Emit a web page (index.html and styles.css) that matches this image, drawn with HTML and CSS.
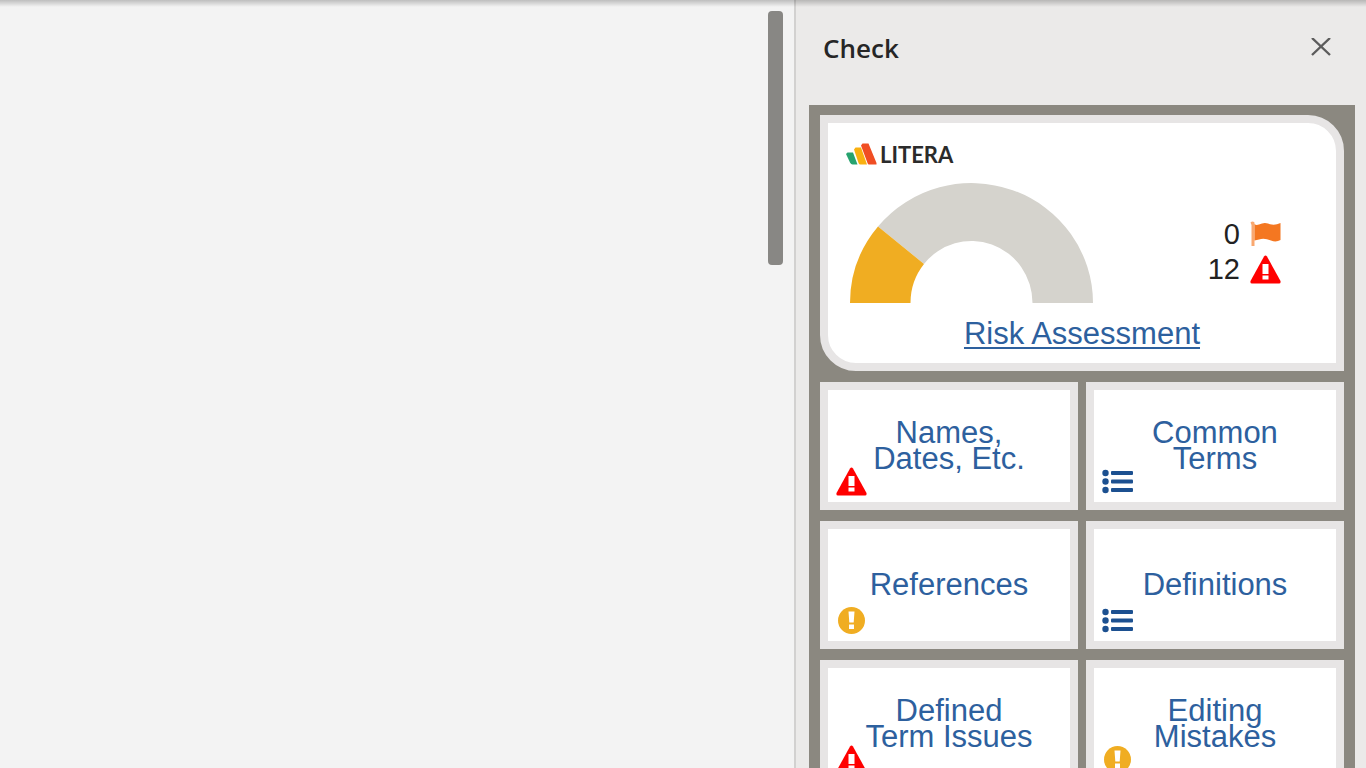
FILE: index.html
```html
<!DOCTYPE html>
<html lang="en">
<head>
    <meta charset="UTF-8">
    <meta name="viewport" content="width=device-width, initial-scale=1.0">
    <title>Check</title>

    <link rel="stylesheet" href="styles.css">
</head>
<body>
    <!-- Shared icons -->
    <svg class="icon-defs" aria-hidden="true">
        <symbol id="icon-warning" viewBox="0 0 31 29">
            <path fill="#ff0000" d="M14 1.5Q15.500 -.5 17 1.500L30.500 26Q31 28.500 29 28.500H2Q0 28.500 .5 26Z"/>
            <path fill="#fff" d="M12.500 9h6v10h-6zM12.500 20.500h6v4h-6z"/>
        </symbol>
        <symbol id="icon-caution" viewBox="0 0 31 29">
            <circle cx="15.500" cy="14.500" r="13.500" fill="#f0ad22"/>
            <path fill="#fff" d="M12.500 5.500h6l-.8 11h-4.400zM13 18.500h5v4.500h-5z"/>
        </symbol>
        <symbol id="icon-list" viewBox="0 0 31 29">
            <g fill="#1c5090">
                <circle cx="3.500" cy="6" r="3.200"/>
                <circle cx="3.500" cy="14.500" r="3.200"/>
                <circle cx="3.500" cy="23" r="3.200"/>
                <rect x="9" y="4" width="22" height="4" rx="1"/>
                <rect x="9" y="12.500" width="22" height="4" rx="1"/>
                <rect x="9" y="21" width="22" height="4" rx="1"/>
            </g>
        </symbol>
        <symbol id="icon-flag" viewBox="0 0 31 29">
            <path fill="#f9a870" d="M.5 2.500Q2.500 .5 4.500 2.500V26H1.500V5Z"/>
            <path fill="#f47721" d="M4.500 4Q6 5.500 9 4.500Q14 2 18 3.500Q24 6 30.500 3V20Q26 22.500 21 20.500Q14 17.500 9 19.500L4.500 20.500Z"/>
        </symbol>
    </svg>

    <div class="app">
        <main class="document">
            <div class="scroll-thumb"></div>
        </main>

        <aside class="panel">
            <header class="panel-header">
                <h1>Check</h1>
                <button class="close" type="button" aria-label="Close">
                    <svg width="20" height="20" viewBox="0 0 20 20">
                        <path d="M1 0l18 17M19 0L1 17" fill="none" stroke="#5c5c5c" stroke-width="2.4"/>
                    </svg>
                </button>
            </header>

            <div class="board">
                <section class="card">
                    <div class="logo">
                        <svg width="31" height="22" viewBox="0 0 31 22">
                            <path fill="#27a36f" d="M0 11l1.500-1.500H7l4.500 12H6.500Q5 21.500 4 19.500z"/>
                            <path fill="#f9b010" d="M8 6.500L9.500 4.500H15l6 17h-6.500Q13 21.500 12.500 20z"/>
                            <path fill="#f04e23" d="M15 2.500L16.500 .5H22.500L30.500 20v1.500H23Q22 21.500 21.500 20z"/>
                        </svg>
                        <span>LITERA</span>
                    </div>

                    <div class="summary">
                        <svg class="gauge" width="243" height="120" viewBox="0 0 243 120" role="img" aria-label="Risk level">
                            <path fill="#d5d3cd" d="M28 43.400A121.500 120 0 0 1 243 120H182.500A61 62 0 0 0 74 81Z"/>
                            <path fill="#f0ad22" d="M0 120A121.500 120 0 0 1 28 43.400L74 81A61 62 0 0 0 60.500 120Z"/>
                        </svg>
                        <ul class="counts">
                            <li>0 <svg class="icon"><use href="#icon-flag"/></svg></li>
                            <li>12 <svg class="icon"><use href="#icon-warning"/></svg></li>
                        </ul>
                    </div>

                    <a class="risk-link" href="#">Risk Assessment</a>
                </section>

                <nav class="tiles">
                    <a class="tile" href="#">
                        <span>Names,<br>Dates, Etc.</span>
                        <svg class="icon"><use href="#icon-warning"/></svg>
                    </a>
                    <a class="tile" href="#">
                        <span>Common<br>Terms</span>
                        <svg class="icon"><use href="#icon-list"/></svg>
                    </a>
                    <a class="tile" href="#">
                        <span>References</span>
                        <svg class="icon"><use href="#icon-caution"/></svg>
                    </a>
                    <a class="tile" href="#">
                        <span>Definitions</span>
                        <svg class="icon"><use href="#icon-list"/></svg>
                    </a>
                    <a class="tile" href="#">
                        <span>Defined<br>Term Issues</span>
                        <svg class="icon"><use href="#icon-warning"/></svg>
                    </a>
                    <a class="tile" href="#">
                        <span>Editing<br>Mistakes</span>
                        <svg class="icon"><use href="#icon-caution"/></svg>
                    </a>
                </nav>
            </div>
        </aside>
    </div>
</body>
</html>
```
FILE: styles.css
```css
* {
    box-sizing: border-box;
}

body {
    margin: 0;
    font-family: Arial, "Liberation Sans", sans-serif;
    background: #f3f3f3;
    overflow: hidden;
}

.icon-defs {
    position: absolute;
    width: 0;
    height: 0;
}

.app {
    display: flex;
    height: 100vh;
    overflow: hidden;
}

/* Shadow cast by the ribbon above */
.app::before {
    content: "";
    position: absolute;
    top: 0;
    left: 0;
    right: 0;
    height: 7px;
    background: linear-gradient(to bottom, rgba(0,0,0,0.22), rgba(0,0,0,0));
}

/* Document area */
.document {
    flex: 1;
    display: flex;
    justify-content: flex-end;
    padding: 11px 11px 0 0;
}

.scroll-thumb {
    width: 15px;
    height: 254px;
    background: #888784;
    border-radius: 4px;
}

/* Side panel */
.panel {
    width: 572px;
    padding: 0 11px 0 13px;
    background: #ebeae9;
    border-left: 2px solid #d2d1d0;
}

.panel-header {
    display: flex;
    align-items: center;
    justify-content: space-between;
    height: 105px;
    padding: 0 20px 10px 14px;
}

.panel-header h1 {
    margin: 0;
    font-family: "Segoe UI", "Open Sans", sans-serif;
    font-size: 26px;
    font-weight: 600;
    line-height: 36px;
    color: #262626;
}

.close {
    display: flex;
    padding: 4px;
    background: none;
    border: none;
    cursor: pointer;
}

.board {
    padding: 10px 11px;
    background: #8b8880;
}

/* Risk summary */
.card {
    display: flex;
    flex-direction: column;
    height: 256px;
    margin-bottom: 11px;
    padding: 18px;
    background: #fff;
    border: 8px solid #e7e5e5;
    border-radius: 0 36px 0 36px;
}

.logo {
    display: flex;
    align-items: center;
    gap: 3px;
    height: 26px;
    font-family: Lato, sans-serif;
    font-size: 22px;
    font-weight: 700;
    color: #2b2b2b;
}

.summary {
    display: flex;
    align-items: center;
    justify-content: space-between;
    padding: 16px 37px 0 4px;
}

.counts {
    margin: 0;
    padding: 18px 0 0;
    list-style: none;
    font-size: 29px;
    line-height: 35px;
    color: #222;
}

.counts li {
    display: flex;
    align-items: center;
    justify-content: flex-end;
    gap: 10px;
}

.icon {
    width: 31px;
    height: 29px;
}

.risk-link {
    align-self: center;
    margin-top: 13px;
    font-size: 31px;
    line-height: 36px;
    text-decoration-thickness: 2px;
    text-underline-offset: 3px;
    color: #2d609e;
}

/* Check tiles */
.tiles {
    display: grid;
    grid-template-columns: 1fr 1fr;
    gap: 11px 8px;
}

.tile {
    position: relative;
    display: flex;
    align-items: center;
    justify-content: center;
    height: 128px;
    background: #fff;
    border: 8px solid #e7e5e5;
    font-size: 31px;
    line-height: 26px;
    text-align: center;
    text-decoration: none;
    color: #2d609e;
}

.tile .icon {
    position: absolute;
    left: 8px;
    bottom: 6px;
}
```
